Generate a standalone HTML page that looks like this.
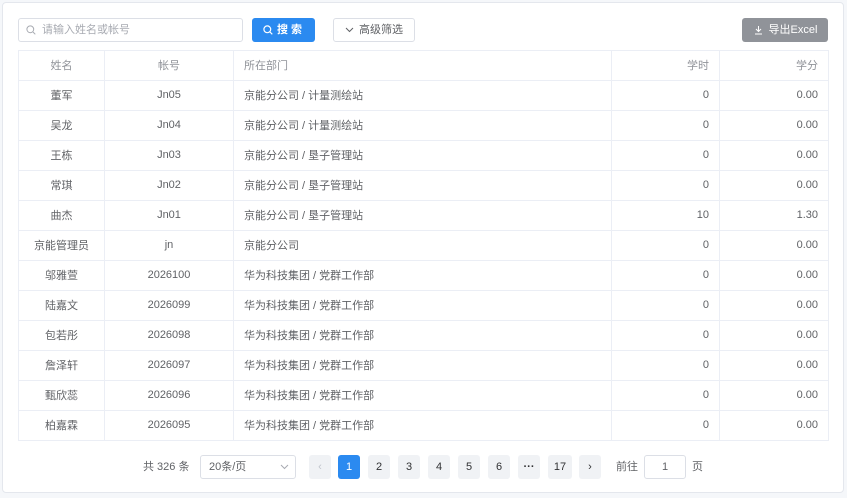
<!DOCTYPE html>
<html><head><meta charset="utf-8"><style>
*{box-sizing:border-box;margin:0;padding:0}
body{width:847px;height:498px;background:#f5f7fa;font-family:"Liberation Sans","Noto Sans CJK SC",sans-serif;font-size:11px;color:#606266;position:relative;overflow:hidden}
.card{position:absolute;left:2px;top:2px;width:842px;height:491px;background:#fff;border:1px solid #e4e7ed;border-radius:4px}
.abs{position:absolute}
.inp{left:18px;top:18px;width:225px;height:24px;border:1px solid #dcdfe6;border-radius:3px;color:#a8abb2;padding-left:23px;line-height:22px}
.btn{top:18px;height:24px;border-radius:3px;line-height:24px;text-align:center;font-size:11px}
table{position:absolute;left:18px;top:50px;width:810px;border-collapse:collapse;table-layout:fixed}
td,th{border:1px solid #ebeef5;height:30px;font-weight:normal;padding:0 10px;white-space:nowrap;overflow:hidden;padding-bottom:2px}
th{color:#909399;height:30px}
.c{text-align:center}.r{text-align:right}.l{text-align:left}
.wrap{position:absolute;left:18px;top:50px;width:811px;height:391px;overflow:hidden;border-bottom:1px solid #ebeef5}
.wrap table{left:0;top:0}
.pg{top:455px;height:24px;line-height:24px;text-align:center;border-radius:3px;background:#f0f2f5;color:#303133;width:22px}
</style></head><body>
<div class="card"></div>
<div class="abs inp">请输入姓名或帐号</div>
<svg class="abs" style="left:26px;top:25px" width="10" height="10" viewBox="0 0 10 10"><circle cx="4.3" cy="4.3" r="3.4" fill="none" stroke="#a8abb2" stroke-width="1"/><path d="M7 7l2.3 2.3" stroke="#a8abb2"/></svg>
<div class="abs btn" style="left:252px;width:63px;background:#2b8af0;color:#fff;padding-left:12px;font-weight:bold">搜 索</div>
<svg class="abs" style="left:263px;top:25px" width="10" height="10" viewBox="0 0 10 10"><circle cx="4.3" cy="4.3" r="3.4" fill="none" stroke="#fff" stroke-width="1.2"/><path d="M7 7l2.3 2.3" stroke="#fff" stroke-width="1.2"/></svg>
<div class="abs btn" style="left:333px;width:82px;border:1px solid #dcdfe6;color:#606266;line-height:22px;padding-left:14px">高级筛选</div>
<svg class="abs" style="left:345px;top:27px" width="9" height="6" viewBox="0 0 9 6"><path d="M1 1l3.5 3.5L8 1" fill="none" stroke="#606266"/></svg>
<div class="abs btn" style="left:742px;width:86px;background:#909399;color:#fff;padding-left:16px">导出Excel</div>
<svg class="abs" style="left:754px;top:25px" width="9" height="10" viewBox="0 0 9 10"><path d="M4.5 1v5M2 4l2.5 2.5L7 4M1 9h7" fill="none" stroke="#fff"/></svg>
<div class="wrap"><table>
<colgroup><col style="width:86px"><col style="width:129px"><col style="width:378px"><col style="width:108px"><col style="width:109px"></colgroup>
<tr><th class="c">姓名</th><th class="c">帐号</th><th class="l">所在部门</th><th class="r">学时</th><th class="r">学分</th></tr>
<tr><td class="c">董军</td><td class="c">Jn05</td><td>京能分公司 / 计量测绘站</td><td class="r">0</td><td class="r">0.00</td></tr>
<tr><td class="c">吴龙</td><td class="c">Jn04</td><td>京能分公司 / 计量测绘站</td><td class="r">0</td><td class="r">0.00</td></tr>
<tr><td class="c">王栋</td><td class="c">Jn03</td><td>京能分公司 / 垦子管理站</td><td class="r">0</td><td class="r">0.00</td></tr>
<tr><td class="c">常琪</td><td class="c">Jn02</td><td>京能分公司 / 垦子管理站</td><td class="r">0</td><td class="r">0.00</td></tr>
<tr><td class="c">曲杰</td><td class="c">Jn01</td><td>京能分公司 / 垦子管理站</td><td class="r">10</td><td class="r">1.30</td></tr>
<tr><td class="c">京能管理员</td><td class="c">jn</td><td>京能分公司</td><td class="r">0</td><td class="r">0.00</td></tr>
<tr><td class="c">邬雅萱</td><td class="c">2026100</td><td>华为科技集团 / 党群工作部</td><td class="r">0</td><td class="r">0.00</td></tr>
<tr><td class="c">陆嘉文</td><td class="c">2026099</td><td>华为科技集团 / 党群工作部</td><td class="r">0</td><td class="r">0.00</td></tr>
<tr><td class="c">包若彤</td><td class="c">2026098</td><td>华为科技集团 / 党群工作部</td><td class="r">0</td><td class="r">0.00</td></tr>
<tr><td class="c">詹泽轩</td><td class="c">2026097</td><td>华为科技集团 / 党群工作部</td><td class="r">0</td><td class="r">0.00</td></tr>
<tr><td class="c">甄欣蕊</td><td class="c">2026096</td><td>华为科技集团 / 党群工作部</td><td class="r">0</td><td class="r">0.00</td></tr>
<tr><td class="c">柏嘉霖</td><td class="c">2026095</td><td>华为科技集团 / 党群工作部</td><td class="r">0</td><td class="r">0.00</td></tr>
</table></div>
<div class="abs" style="left:143px;top:455px;line-height:24px">共 326 条</div>
<div class="abs" style="left:200px;top:455px;width:96px;height:24px;border:1px solid #dcdfe6;border-radius:3px;line-height:22px;padding-left:8px;color:#606266">20条/页</div>
<svg class="abs" style="left:280px;top:464px" width="9" height="6" viewBox="0 0 9 6"><path d="M1 1l3.5 3.5L8 1" fill="none" stroke="#a8abb2"/></svg>
<div class="abs pg" style="left:309px;color:#c0c4cc">&#8249;</div>
<div class="abs pg" style="left:338px;background:#2b8af0;color:#fff">1</div>
<div class="abs pg" style="left:368px">2</div>
<div class="abs pg" style="left:398px">3</div>
<div class="abs pg" style="left:428px">4</div>
<div class="abs pg" style="left:458px">5</div>
<div class="abs pg" style="left:488px">6</div>
<div class="abs pg" style="left:518px;font-weight:bold">···</div>
<div class="abs pg" style="left:548px;width:24px">17</div>
<div class="abs pg" style="left:579px">&#8250;</div>
<div class="abs" style="left:616px;top:455px;line-height:24px">前往</div>
<div class="abs" style="left:644px;top:455px;width:42px;height:24px;border:1px solid #dcdfe6;border-radius:3px;text-align:center;line-height:22px">1</div>
<div class="abs" style="left:692px;top:455px;line-height:24px">页</div>
</body></html>
